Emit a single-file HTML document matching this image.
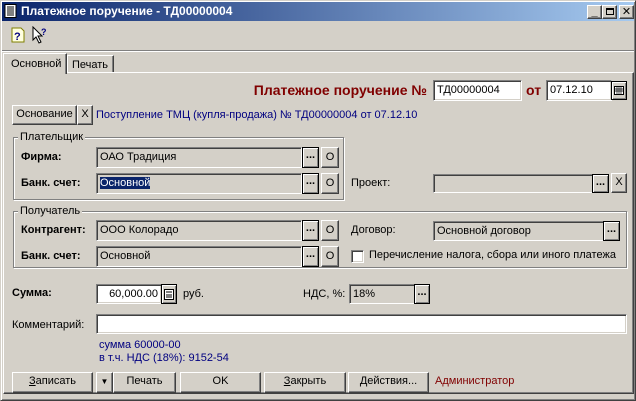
<!DOCTYPE html>
<html><head><meta charset="utf-8"><style>
*{box-sizing:border-box;margin:0;padding:0}
body{width:636px;height:401px;overflow:hidden;background:#d4d0c8;font-family:"Liberation Sans","DejaVu Sans",sans-serif;font-size:11px;color:#000;position:relative}
.a{position:absolute;white-space:nowrap}
.fld{position:absolute;border-top:1px solid #808080;border-left:1px solid #808080;border-right:1px solid #fff;border-bottom:1px solid #fff;box-shadow:inset 1px 1px 0 #404040,inset -1px -1px 0 #d4d0c8;padding:2px 3px;line-height:14px;white-space:nowrap;overflow:hidden}
.btn{position:absolute;border-top:1px solid #fff;border-left:1px solid #fff;border-right:1px solid #404040;border-bottom:1px solid #404040;box-shadow:inset -1px -1px 0 #808080;text-align:center;line-height:17px;white-space:nowrap;background:#d4d0c8}
.dots{position:absolute;border:1px solid #000;background:#d4d0c8;box-shadow:inset 1px 1px 0 #fff,inset -1px -1px 0 #808080;font-weight:bold;text-align:center;line-height:14px;font-size:11px}
.grp{position:absolute;border:1px solid #808080;box-shadow:1px 1px 0 #fff,inset 1px 1px 0 #fff}
.gl{position:absolute;background:#d4d0c8;padding:0 2px;line-height:12px}
b{font-weight:bold}
.blue{color:#000080}
</style></head><body>
<!-- window border -->
<div class="a" style="left:0;top:0;width:636px;height:401px;border-top:1px solid #d4d0c8;border-left:1px solid #d4d0c8;border-right:1px solid #404040;border-bottom:1px solid #404040;box-shadow:inset 1px 1px 0 #fff,inset -1px -1px 0 #808080"></div>
<!-- title -->
<div class="a" style="left:2px;top:2px;width:632px;height:19px;background:linear-gradient(to right,#0a246a,#a6caf0)"></div>
<svg class="a" style="left:4px;top:4px" width="14" height="15"><rect x="1" y="0.5" width="11" height="13" fill="#fff" stroke="#000"/><path d="M3 3h7M3 5h7M3 7h7M3 9h7M3 11h7" stroke="#000"/></svg>
<div class="a" style="left:21px;top:3px;color:#fff;font-weight:bold;font-size:12px;line-height:16px">Платежное поручение - ТД00000004</div>
<div class="btn" style="left:587px;top:5px;width:15px;height:14px;line-height:12px;font-weight:bold">_</div>
<div class="btn" style="left:602px;top:5px;width:15px;height:14px"><div style="position:absolute;left:3px;top:2px;width:8px;height:7px;border:1px solid #000;border-top-width:2px"></div></div>
<div class="btn" style="left:619px;top:5px;width:15px;height:14px;line-height:12px;font-weight:bold;font-size:11px">✕</div>
<!-- toolbar -->
<svg class="a" style="left:11px;top:27px" width="14" height="16"><path d="M1 1h9l3 3v11H1z" fill="#ffffe0" stroke="#808000"/><text x="3" y="13" font-size="11" font-weight="bold" fill="#000080" font-family="Liberation Sans">?</text></svg>
<svg class="a" style="left:32px;top:26px" width="18" height="18"><path d="M1 1v13l3-3 3 6 2-1-3-6h4z" fill="#fff" stroke="#000"/><text x="9" y="9" font-size="9" font-weight="bold" fill="#000080" font-family="Liberation Sans">?</text></svg>
<div class="a" style="left:2px;top:50px;width:632px;height:2px;border-top:1px solid #808080;border-bottom:1px solid #fff"></div>
<!-- tabs -->
<div class="a" style="left:3px;top:72px;width:631px;height:322px;border-top:1px solid #fff;border-left:1px solid #fff;border-right:1px solid #404040;border-bottom:1px solid #404040;box-shadow:inset -1px -1px 0 #808080"></div>
<div class="a" style="left:3px;top:53px;width:64px;height:21px;border-top:1px solid #fff;border-left:1px solid #fff;border-right:1px solid #404040;box-shadow:inset -1px 0 0 #808080;background:#d4d0c8;padding:4px 0 0 7px;line-height:12px">Основной</div>
<div class="a" style="left:67px;top:55px;width:47px;height:17px;border-top:1px solid #fff;border-left:1px solid #fff;border-right:1px solid #404040;box-shadow:inset -1px 0 0 #808080;padding:3px 0 0 4px;line-height:12px">Печать</div>
<!-- header -->
<div class="a" style="left:240px;top:81px;width:187px;text-align:right;color:#800000;font-weight:bold;font-size:14px;line-height:18px">Платежное поручение №</div>
<div class="fld" style="left:433px;top:80px;width:89px;height:21px;background:#fff">ТД00000004</div>
<div class="a" style="left:526px;top:81px;color:#800000;font-weight:bold;font-size:14px;line-height:18px">от</div>
<div class="fld" style="left:546px;top:80px;width:66px;height:21px;background:#fff">07.12.10</div>
<div class="dots" style="left:611px;top:81px;width:16px;height:19px"><svg width="10" height="9" style="margin-top:4px"><rect x="0.5" y="0.5" width="9" height="8" fill="#fff" stroke="#000"/><path d="M0 3h10M0 5h10M3 0v9M5 0v9M7 0v9" stroke="#000" stroke-width="0.7"/></svg></div>
<div class="btn" style="left:12px;top:105px;width:65px;height:20px">Основание</div>
<div class="btn" style="left:77px;top:105px;width:16px;height:20px">X</div>
<div class="a blue" style="left:96px;top:109px;line-height:13px">Поступление ТМЦ (купля-продажа) № ТД00000004 от 07.12.10</div>
<!-- Плательщик -->
<div class="grp" style="left:13px;top:137px;width:331px;height:63px"></div>
<div class="gl" style="left:18px;top:131px">Плательщик</div>
<div class="a" style="left:21px;top:151px;font-weight:bold">Фирма:</div>
<div class="fld" style="left:96px;top:147px;width:206px;height:21px">ОАО Традиция</div>
<div class="dots" style="left:302px;top:147px;width:17px;height:21px">...</div>
<div class="btn" style="left:321px;top:147px;width:18px;height:21px;line-height:19px">О</div>
<div class="a" style="left:21px;top:177px;font-weight:bold">Банк. счет:</div>
<div class="fld" style="left:96px;top:173px;width:206px;height:21px"><span style="background:#0a246a;color:#fff">Основной</span></div>
<div class="dots" style="left:302px;top:173px;width:17px;height:21px">...</div>
<div class="btn" style="left:321px;top:173px;width:18px;height:21px;line-height:19px">О</div>
<div class="a" style="left:351px;top:177px">Проект:</div>
<div class="fld" style="left:433px;top:174px;width:160px;height:19px"></div>
<div class="dots" style="left:592px;top:174px;width:17px;height:19px">...</div>
<div class="btn" style="left:611px;top:173px;width:16px;height:20px">X</div>
<!-- Получатель -->
<div class="grp" style="left:13px;top:211px;width:614px;height:57px"></div>
<div class="gl" style="left:18px;top:205px">Получатель</div>
<div class="a" style="left:21px;top:224px;font-weight:bold">Контрагент:</div>
<div class="fld" style="left:96px;top:220px;width:206px;height:21px">ООО Колорадо</div>
<div class="dots" style="left:302px;top:220px;width:17px;height:21px">...</div>
<div class="btn" style="left:321px;top:220px;width:18px;height:21px;line-height:19px">О</div>
<div class="a" style="left:351px;top:224px">Договор:</div>
<div class="fld" style="left:433px;top:221px;width:171px;height:20px">Основной договор</div>
<div class="dots" style="left:603px;top:221px;width:17px;height:20px">...</div>
<div class="a" style="left:21px;top:250px;font-weight:bold">Банк. счет:</div>
<div class="fld" style="left:96px;top:246px;width:206px;height:21px">Основной</div>
<div class="dots" style="left:302px;top:246px;width:17px;height:21px">...</div>
<div class="btn" style="left:321px;top:246px;width:18px;height:21px;line-height:19px">О</div>
<div class="fld" style="left:351px;top:250px;width:13px;height:13px;background:#fff;padding:0"></div>
<div class="a" style="left:369px;top:249px">Перечисление налога, сбора или иного платежа</div>
<!-- Сумма -->
<div class="a" style="left:12px;top:287px;font-weight:bold">Сумма:</div>
<div class="fld" style="left:96px;top:284px;width:66px;height:20px;background:#fff;text-align:right">60,000.00</div>
<div class="dots" style="left:161px;top:284px;width:16px;height:20px"><svg width="10" height="11" style="margin-top:4px"><rect x="0.5" y="0.5" width="9" height="10" fill="#fff" stroke="#000"/><path d="M2 3h6M2 6h6M2 8h6" stroke="#000"/></svg></div>
<div class="a" style="left:183px;top:288px">руб.</div>
<div class="a" style="left:303px;top:288px">НДС, %:</div>
<div class="fld" style="left:349px;top:284px;width:66px;height:20px">18%</div>
<div class="dots" style="left:414px;top:284px;width:16px;height:20px">...</div>
<div class="a" style="left:12px;top:319px">Комментарий:</div>
<div class="fld" style="left:96px;top:314px;width:531px;height:20px;background:#fff"></div>
<div class="a blue" style="left:99px;top:339px;line-height:13px">сумма 60000-00<br>в т.ч. НДС (18%): 9152-54</div>
<!-- buttons -->
<div class="btn" style="left:12px;top:372px;width:81px;height:21px"><u>З</u>аписать</div>
<div class="btn" style="left:96px;top:372px;width:17px;height:21px;font-size:8px">▼</div>
<div class="btn" style="left:113px;top:372px;width:63px;height:21px">Печать</div>
<div class="btn" style="left:180px;top:372px;width:81px;height:21px">OK</div>
<div class="btn" style="left:264px;top:372px;width:82px;height:21px"><u>З</u>акрыть</div>
<div class="btn" style="left:348px;top:372px;width:81px;height:21px"><u>Д</u>ействия...</div>
<div class="a" style="left:435px;top:375px;color:#800000">Администратор</div>
</body></html>
